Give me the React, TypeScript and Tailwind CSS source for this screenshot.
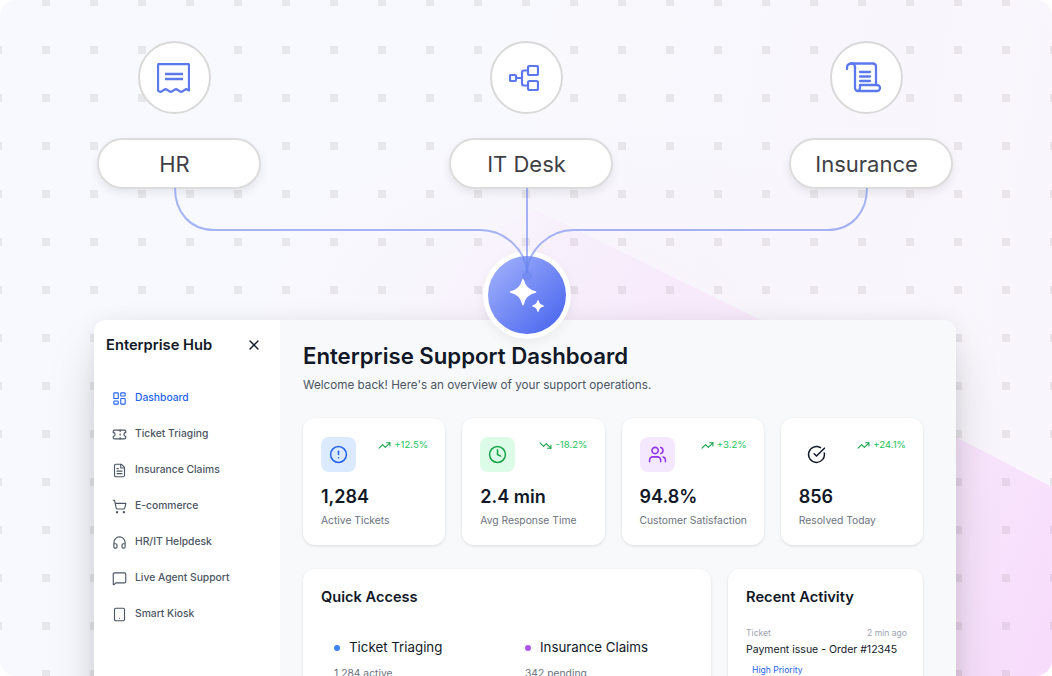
import React from 'react';
import {
  LayoutDashboard,
  Ticket,
  FileText,
  ShoppingCart,
  Headphones,
  MessageSquare,
  Tablet,
  X,
  TrendingUp,
  TrendingDown,
  CircleAlert,
  Clock,
  Users,
  CircleCheckBig,
} from 'lucide-react';

const nav = [
  { label: 'Dashboard', icon: LayoutDashboard, active: true },
  { label: 'Ticket Triaging', icon: Ticket },
  { label: 'Insurance Claims', icon: FileText },
  { label: 'E-commerce', icon: ShoppingCart },
  { label: 'HR/IT Helpdesk', icon: Headphones },
  { label: 'Live Agent Support', icon: MessageSquare },
  { label: 'Smart Kiosk', icon: Tablet },
];

function ReceiptIcon() {
  return (
    <svg className="mr-[2px]" width="33" height="30" viewBox="0 0 33 30" fill="none" stroke="#5b78ee" strokeWidth="2.3" strokeLinejoin="round">
      <path d="M1 27.5 V2 a1 1 0 0 1 1 -1 H31 a1 1 0 0 1 1 1 V27.5 q-2.6 -2.5 -5.2 0 t-5.2 0 t-5.2 0 t-5.2 0 t-5.2 0 t-5 0Z" />
      <path d="M8 11 H26 M8 16 H26" />
    </svg>
  );
}

function FlowIcon() {
  return (
    <svg className="mr-[5px]" width="30" height="26" viewBox="0 0 30 26" fill="none" stroke="#5b78ee" strokeWidth="2.2">
      <rect x="1" y="10" width="6" height="6" rx="1" />
      <rect x="19" y="1" width="10" height="9" rx="1.5" />
      <rect x="19" y="16" width="10" height="9" rx="1.5" />
      <path d="M7 13 H13 M19 5.5 H15 a2 2 0 0 0 -2 2 V18.5 a2 2 0 0 0 2 2 H19" />
    </svg>
  );
}

function ScrollIcon() {
  return (
    <svg className="mr-[4px]" width="36" height="31" viewBox="0 0 36 31" fill="none" stroke="#5b78ee" strokeWidth="2.3" strokeLinecap="round" strokeLinejoin="round">
      <path d="M5 1.5 H27 a3 3 0 0 1 3 3 V23" />
      <path d="M9 5 V26 a3 3 0 0 0 3 3 H31 a3 3 0 0 0 0 -6 H14 V26 a3 3 0 0 1 -3 3" />
      <path d="M9 5 a3.5 3.5 0 0 0 -3.5 -3.5 H5 a4 4 0 0 0 -4 4 V7" />
      <path d="M14 10 H24 M14 14.5 H24 M14 19 H24" />
    </svg>
  );
}

function Node({ label, icon, className }: { label: string; icon: React.ReactNode; className: string }) {
  return (
    <div className={`flex w-[164px] shrink-0 flex-col ${className}`}>
      <div className="ml-[41px] flex h-[73px] w-[73px] items-center justify-center rounded-full border-2 border-[#d9d9d9] bg-white">
        {icon}
      </div>
      <div className="mt-6 flex h-[51px] items-center justify-center rounded-full border-2 border-[#dcdcdc] bg-white pt-[1px] pr-2 text-[22px] text-[#3f3f46] shadow-[0_4px_10px_rgba(0,0,0,0.08)]">
        {label}
      </div>
    </div>
  );
}

function Stat({ icon: Icon, box, delta, down, value, label }: { icon: any; box: string; delta: string; down?: boolean; value: string; label: string }) {
  const Trend = down ? TrendingDown : TrendingUp;
  return (
    <div className="h-[127px] w-0 flex-1 rounded-xl bg-white pt-[19px] pr-[17px] pl-[18px] shadow-[0_1px_3px_rgba(0,0,0,0.12)]">
      <div className="flex items-start justify-between">
        <div className={`flex h-[35px] w-[35px] items-center justify-center rounded-lg ${box}`}>
          <Icon className="h-[19px] w-[19px]" strokeWidth={1.9} />
        </div>
        <div className="flex items-center gap-[3px] text-[9.6px] leading-4 text-[#22c55e]">
          <Trend className="h-[13px] w-[13px] text-[#16a34a]" />
          {delta}
        </div>
      </div>
      <div className="mt-[11px] text-lg leading-7 font-semibold text-[#111827]">{value}</div>
      <div className="mt-[1px] text-[10.3px] leading-4 whitespace-nowrap text-[#6b7280]">{label}</div>
    </div>
  );
}

export default function App() {
  return (
    <div className="relative h-[676px] w-[1052px] overflow-hidden bg-white font-['Inter',sans-serif]">
      <div className="relative h-full overflow-hidden rounded-2xl bg-[radial-gradient(ellipse_at_55%_48%,#f8f2fc,transparent_42%),linear-gradient(100deg,#f8f9fe_40%,#f9f5fc_100%)]">
        <div className="absolute inset-0 bg-[linear-gradient(115deg,transparent_42%,#f7ecfb_56%,#f8e6fc_85%,#f7dcfb_100%)] [clip-path:polygon(536px_210px,761px_320px,956px_437px,1052px_487px,1052px_676px,300px_676px,300px_320px)]" />
        <div className="absolute inset-0 bg-[conic-gradient(at_8px_8px,transparent_75%,rgba(60,50,50,0.09)_0)] bg-[size:48px_48px] bg-[position:-6px_-2px]" />

        <div className="relative flex pt-[41px] pl-[96.5px]">
          <Node label="HR" icon={<ReceiptIcon />} className="" />
          <Node label="IT Desk" icon={<FlowIcon />} className="ml-[188px]" />
          <Node label="Insurance" icon={<ScrollIcon />} className="ml-[176px]" />
        </div>

        <div className="relative mt-[131px] ml-[94px] flex h-[400px] w-[862px] overflow-hidden rounded-xl bg-[#f8f9fb] shadow-[0_25px_50px_-12px_rgba(0,0,0,0.25),0_0_20px_rgba(0,0,0,0.05)]">
          <aside className="w-[186px] shrink-0 bg-white pt-[15px] pl-3">
            <div className="flex items-center justify-between pr-[18px]">
              <span className="text-[14.7px] leading-5 font-semibold text-[#111827]">Enterprise Hub</span>
              <X className="h-4 w-4 text-[#111827]" />
            </div>
            <nav className="mt-[35px] flex flex-col gap-5 pl-[6px]">
              {nav.map(({ label, icon: Icon, active }) => (
                <div key={label} className={`flex h-4 items-center gap-2 text-[10.3px] font-medium ${active ? 'text-[#2563eb]' : 'text-[#4b5563]'}`}>
                  <Icon className="h-[15px] w-[15px]" strokeWidth={1.8} />
                  {label}
                </div>
              ))}
            </nav>
          </aside>
          <main className="flex-1 pt-[22px] pr-[33px] pl-[23px]">
            <h1 className="text-[22.2px] leading-7 font-semibold text-[#111827]">Enterprise Support Dashboard</h1>
            <p className="mt-[7px] text-[11.7px] leading-4 text-[#4b5563]">Welcome back! Here's an overview of your support operations.</p>
            <div className="mt-[25px] flex gap-[17px]">
              <Stat icon={CircleAlert} box="bg-[#dbeafe] text-[#2563eb]" delta="+12.5%" value="1,284" label="Active Tickets" />
              <Stat icon={Clock} box="bg-[#dcfce7] text-[#16a34a]" delta="-18.2%" down value="2.4 min" label="Avg Response Time" />
              <Stat icon={Users} box="bg-[#f3e8ff] text-[#9333ea]" delta="+3.2%" value="94.8%" label="Customer Satisfaction" />
              <Stat icon={CircleCheckBig} box="text-[#111827]" delta="+24.1%" value="856" label="Resolved Today" />
            </div>
            <div className="mt-6 flex gap-[17px]">
              <section className="h-[200px] w-[408px] rounded-xl bg-white pt-[18px] pl-[18px] shadow-[0_1px_3px_rgba(0,0,0,0.12)]">
                <h2 className="text-[14.6px] leading-5 font-semibold text-[#111827]">Quick Access</h2>
                <div className="mt-[31px] flex pl-[13px]">
                  <div className="w-[191px]">
                    <div className="flex items-center gap-[9px] text-[13.3px] text-[#111827]">
                      <span className="h-[6px] w-[6px] rounded-full bg-[#3b82f6]" />
                      Ticket Triaging
                    </div>
                    <div className="mt-2 text-[10.3px] text-[#6b7280]">1,284 active</div>
                  </div>
                  <div>
                    <div className="flex items-center gap-[9px] text-[13.3px] text-[#111827]">
                      <span className="h-[6px] w-[6px] rounded-full bg-[#a855f7]" />
                      Insurance Claims
                    </div>
                    <div className="mt-2 text-[10.3px] text-[#6b7280]">342 pending</div>
                  </div>
                </div>
              </section>
              <section className="h-[200px] w-[195px] rounded-xl bg-white pt-[18px] pr-4 pl-[18px] shadow-[0_1px_3px_rgba(0,0,0,0.12)]">
                <h2 className="text-[14.7px] leading-5 font-semibold text-[#111827]">Recent Activity</h2>
                <div className="mt-5 flex justify-between text-[8.6px] text-[#9ca3af]">
                  <span>Ticket</span>
                  <span>2 min ago</span>
                </div>
                <div className="mt-[2px] text-[10.5px] text-[#111827]">Payment issue - Order #12345</div>
                <div className="mt-[6px] pl-[6px] text-[8.6px] text-[#2563eb]">High Priority</div>
              </section>
            </div>
          </main>
        </div>

        <div className="absolute top-[251px] left-[483px] flex h-[88px] w-[88px] items-center justify-center rounded-full bg-white shadow-[0_4px_12px_rgba(0,0,0,0.06)]">
          <div className="flex h-[78px] w-[78px] items-center justify-center rounded-full bg-[linear-gradient(135deg,#a5b4fc,#4361ee)]">
            <svg width="40" height="40" viewBox="0 0 40 40" fill="white" stroke="white" strokeWidth="1.5" strokeLinejoin="round">
              <path d="M16 4.5 C17.5 11.5 21 15.5 28.5 17 C21 18.5 17.5 22.5 16 29.5 C14.5 22.5 11 18.5 3.5 17 C11 15.5 14.5 11.5 16 4.5Z" />
              <path d="M31 26 C31.6 29 33 30.4 36 31 C33 31.6 31.6 33 31 36 C30.4 33 29 31.6 26 31 C29 30.4 30.4 29 31 26Z" />
            </svg>
          </div>
        </div>

        <svg className="absolute top-[188px] left-0" width="1052" height="94" fill="none" stroke="#6d86ee" strokeOpacity="0.6" strokeWidth="2">
          <path d="M175 0 C175 24 190 42 214 42 H480 C505 42 526 62 527 85" />
          <path d="M527 0 V85" />
          <path d="M867 0 C867 24 852 42 828 42 H574 C549 42 528 62 527 85" />
          <circle cx="527" cy="88" r="5" fill="#6d86ee" fillOpacity="0.6" stroke="none" />
        </svg>
      </div>
    </div>
  );
}
